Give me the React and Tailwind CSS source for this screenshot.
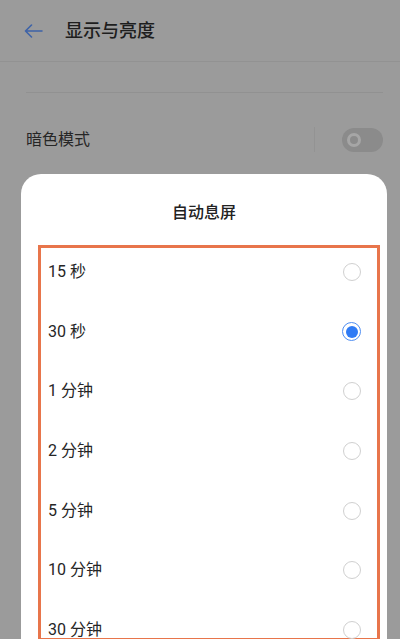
import React from "react";

const options = [
  { label: "15 秒", selected: false },
  { label: "30 秒", selected: true },
  { label: "1 分钟", selected: false },
  { label: "2 分钟", selected: false },
  { label: "5 分钟", selected: false },
  { label: "10 分钟", selected: false },
  { label: "30 分钟", selected: false },
];

const Radio = ({ selected }) =>
  selected ? (
    <div className="w-[19px] h-[19px] rounded-full border-[1.5px] border-[#4f8ef2] flex items-center justify-center">
      <div className="w-[12px] h-[12px] rounded-full bg-[#2f7bf5]" />
    </div>
  ) : (
    <div className="w-[18px] h-[18px] rounded-full border-[1.5px] border-[#d0d0d0]" />
  );

export default function App() {
  return (
    <div
      className="w-[400px] h-[639px] overflow-hidden bg-[#9b9b9b]"
      style={{ fontFamily: "Roboto, 'Noto Sans CJK SC', sans-serif" }}
    >
      {/* Header */}
      <div className="h-[62px] flex items-center pl-[24px] border-b border-[#929292]">
        <svg width="19" height="14" viewBox="0 0 19 14" fill="none">
          <path
            d="M18 7H1.5M7.5 1L1.5 7l6 6"
            stroke="#3e63a8"
            strokeWidth="1.6"
            strokeLinecap="round"
            strokeLinejoin="round"
          />
        </svg>
        <span className="ml-[22px] text-[18px] font-medium text-[#1e1e1e]">显示与亮度</span>
      </div>

      <div className="mt-[30px] ml-[26px] mr-[17px] border-t border-[#919191]" />

      {/* Dark mode row */}
      <div className="mt-[34px] h-[25px] flex items-center pl-[26px] pr-[17px]">
        <span className="flex-1 text-[16px] text-[#262626]">暗色模式</span>
        <div className="w-px h-[25px] bg-[#939393] mr-[27px]" />
        <div className="w-[41px] h-[24px] rounded-full bg-[#8b8b8b] flex items-center pl-[5px]">
          <div className="w-[14px] h-[14px] rounded-full border-[3px] border-[#a6a6a6]" />
        </div>
      </div>

      {/* Bottom sheet */}
      <div className="mt-[22px] ml-[21px] w-[366px] h-[600px] bg-white rounded-t-[20px]">
        <div className="pt-[27px] h-[51px] text-center text-[16px] leading-[24px] font-medium text-[#222]">
          自动息屏
        </div>
        <div className="mt-[20px] ml-[17px] w-[342px] h-[396px] border-[3px] border-[#e8754b] pt-[12px] pl-[7px] pr-[16px] flex flex-col gap-[35.7px]">
          {options.map((o) => (
            <div key={o.label} className="h-[24px] flex items-center justify-between">
              <span className="text-[16px] text-[#262626]">{o.label}</span>
              <Radio selected={o.selected} />
            </div>
          ))}
        </div>
      </div>
    </div>
  );
}
